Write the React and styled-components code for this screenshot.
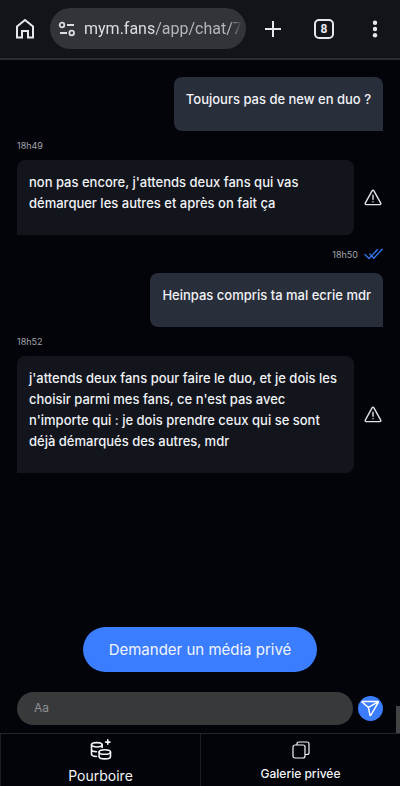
import React from "react";
import styled, { createGlobalStyle } from "styled-components";

const GlobalStyle = createGlobalStyle`
  * {
    box-sizing: border-box;
  }

  body {
    margin: 0;
    background: #020409;
    color: #f1f3f7;
    font-family: Inter, "Liberation Sans", sans-serif;
  }

  button {
    margin: 0;
    padding: 0;
    border: none;
    background: none;
    color: inherit;
    font: inherit;
    cursor: pointer;
  }

  svg {
    display: block;
    flex: none;
  }
`;

const Page = styled.div`
  display: flex;
  flex-direction: column;
  min-height: 100vh;
`;

const BrowserBar = styled.header`
  display: flex;
  align-items: center;
  gap: 12px;
  height: 60px;
  padding: 0 12px 1px;
  background: #131419;
  border-bottom: 2px solid #2b2c30;
`;

const BarButton = styled.button`
  display: flex;
  align-items: center;
  justify-content: center;
  width: 26px;
  height: 40px;
  color: #e6e7ec;
`;

const Address = styled.button`
  display: flex;
  flex: 1;
  align-items: center;
  gap: 8px;
  min-width: 0;
  height: 41px;
  padding: 0 4px 0 8px;
  border-radius: 21px;
  background: #33343a;
  color: #b4b5bb;
  font-family: Roboto, sans-serif;
  font-size: 16px;
`;

const Url = styled.span`
  flex: 1;
  overflow: hidden;
  white-space: nowrap;
  text-align: left;
  mask-image: linear-gradient(to right, #000 92%, transparent);
`;

const Host = styled.span`
  color: #dcdde2;
`;

const BarActions = styled.div`
  display: flex;
  gap: 25px;
  padding-left: 2px;
`;

const Chat = styled.main`
  flex: 1;
  padding: 17px 17px 0;
`;

const Message = styled.div`
  display: flex;
  align-items: center;
  justify-content: ${({ $sent }) => ($sent ? "flex-end" : "space-between")};
`;

const Bubble = styled.p`
  max-width: 337px;
  width: ${({ $sent }) => ($sent ? "auto" : "100%")};
  margin: 0;
  padding: 12px 12px 21px;
  border-radius: ${({ $sent }) => ($sent ? "8px 8px 0 8px" : "8px 8px 8px 0")};
  background: ${({ $sent }) => ($sent ? "#292e3b" : "#12151c")};
  font-size: 13px;
  font-weight: 500;
  line-height: 21px;
`;

const ReportButton = styled.button`
  padding: 1px;
`;

const Time = styled.div`
  display: flex;
  align-items: center;
  justify-content: ${({ $sent }) => ($sent ? "flex-end" : "flex-start")};
  gap: 6px;
  height: ${({ $sent }) => ($sent ? "38px" : "29px")};
  color: #a2a4a9;
  font-size: 9px;
`;

const Composer = styled.form`
  padding: 0 17px 8px;
`;

const RequestButton = styled.button`
  display: block;
  height: 45px;
  margin: 0 auto 20px;
  padding: 0 26px;
  border-radius: 23px;
  background: #3b7dff;
  color: #f1f5ff;
  font-size: 15px;
`;

const InputRow = styled.div`
  display: flex;
  align-items: center;
  gap: 5px;
`;

const TextInput = styled.input`
  flex: 1;
  min-width: 0;
  height: 33px;
  padding: 0 17px 3px;
  border: none;
  border-radius: 17px;
  outline: none;
  background: #38393b;
  color: #f1f3f7;
  font-family: Inter, sans-serif;
  font-size: 12px;

  &::placeholder {
    color: #8f9093;
    opacity: 1;
  }
`;

const SendButton = styled.button`
  display: flex;
  align-items: center;
  justify-content: center;
  width: 25px;
  height: 25px;
  border-radius: 50%;
  background: #3b7dff;
`;

const Footer = styled.nav`
  display: grid;
  grid-template-columns: 1fr 1fr;
  border-top: 1px solid #24262a;
`;

const FooterButton = styled.button`
  display: flex;
  flex-direction: column;
  align-items: center;
  justify-content: flex-end;
  gap: 7px;
  height: 52px;
  padding-bottom: ${({ $bottom }) => $bottom};
  border-left: 1px solid #1d1f23;
  color: #f4f5f7;
  font-size: ${({ $size }) => $size};
  font-weight: ${({ $weight }) => $weight};
  line-height: 16px;
`;

const ScrollThumb = styled.div`
  position: fixed;
  right: 0;
  bottom: 53px;
  width: 4px;
  height: 27px;
  background: #424345;
`;

const HomeIcon = () => (
  <svg width="20" height="22" viewBox="0 0 20 22" fill="none" stroke="currentColor" strokeWidth="2">
    <path d="M2 8.500 10 2l8 6.500V19.500h-5v-6.500H7v6.500H2Z" />
  </svg>
);

const TuneIcon = () => (
  <svg width="18" height="16" viewBox="0 0 18 16" fill="none" stroke="#dcdde2" strokeWidth="1.800">
    <circle cx="4" cy="4" r="2.300" />
    <path d="M9 4h7M2 12h7" />
    <circle cx="13.700" cy="12" r="2.300" />
  </svg>
);

const PlusIcon = () => (
  <svg width="18" height="18" viewBox="0 0 18 18" fill="none" stroke="currentColor" strokeWidth="2">
    <path d="M9 1v16M1 9h16" />
  </svg>
);

const TabCount = styled.span`
  display: flex;
  align-items: center;
  justify-content: center;
  width: 20px;
  height: 20px;
  border: 2px solid currentColor;
  border-radius: 5px;
  font-family: Roboto, sans-serif;
  font-size: 12px;
  font-weight: 700;
  line-height: 12px;
`;

const DotsIcon = () => (
  <svg width="6" height="18" viewBox="0 0 6 18" fill="currentColor">
    <circle cx="3" cy="2.800" r="2.200" />
    <circle cx="3" cy="9" r="2.200" />
    <circle cx="3" cy="15.200" r="2.200" />
  </svg>
);

const WarningIcon = () => (
  <svg
    width="18"
    height="17"
    viewBox="0 0 18 17"
    fill="none"
    stroke="#e3e4e7"
    strokeWidth="1.400"
    strokeLinecap="round"
    strokeLinejoin="round"
  >
    <path d="M8.200 1.700 1.300 14.100Q.800 15.500 2.200 15.600H15.800Q17.200 15.500 16.700 14.100L9.800 1.700Q9 .600 8.200 1.700Z" />
    <path d="M9 6.200v4M9 12.600v.200" />
  </svg>
);

const DoubleCheckIcon = () => (
  <svg
    width="19"
    height="12"
    viewBox="0 0 19 12"
    fill="none"
    stroke="#3577ee"
    strokeWidth="1.300"
    strokeLinecap="round"
    strokeLinejoin="round"
  >
    <path d="m1 6.500 4 4 8.500-9M5.800 6l4 4.200L18.200 1.200" />
  </svg>
);

const SendIcon = () => (
  <svg
    width="19"
    height="17"
    viewBox="0 0 19 17"
    fill="none"
    stroke="#fff"
    strokeWidth="1.400"
    strokeLinecap="round"
    strokeLinejoin="round"
  >
    <path d="M1.500 1.500h15.300q.900.100.500.900L9.900 15.200q-.600.800-1-.200L7.400 7.400 1.200 2.300q-.400-.600.300-.800ZM7.400 7.400l9.800-5.600" />
  </svg>
);

const CoinsIcon = () => (
  <svg width="22" height="22" viewBox="0 0 22 22" fill="none" stroke="currentColor" strokeWidth="1.600" strokeLinecap="round">
    <ellipse cx="6.800" cy="5.800" rx="5.300" ry="2.200" />
    <path d="M1.500 5.800v9.500c0 1.200 2 2 5 2.200M12.100 5.800v2.600M1.500 10.500c0 1.200 2 2.200 5 2.200" />
    <ellipse cx="14.800" cy="13" rx="5.700" ry="2.300" />
    <path d="M9.100 13v4.500c0 1.300 2.500 2.400 5.700 2.400s5.700-1.100 5.700-2.400V13" />
    <path d="M17.800.900v4.400M15.600 3.100H20" />
  </svg>
);

const GalleryIcon = () => (
  <svg width="18" height="18" viewBox="0 0 18 18" fill="none" stroke="currentColor" strokeWidth="1.200" strokeLinejoin="round">
    <rect x="1" y="4" width="12" height="13" rx="2" />
    <path d="M5 4V3q0-2 2-2h8q2 0 2 2v8.500q0 2-2 2h-2" />
  </svg>
);

const messages = [
  { sent: true, text: "Toujours pas de new en duo ?" },
  {
    time: "18h49",
    text: "non pas encore, j'attends deux fans qui vas démarquer les autres et après on fait ça",
  },
  { sent: true, time: "18h50", text: "Heinpas compris ta mal ecrie mdr" },
  {
    time: "18h52",
    text: "j'attends deux fans pour faire le duo, et je dois les choisir parmi mes fans, ce n'est pas avec n'importe qui : je dois prendre ceux qui se sont déjà démarqués des autres, mdr",
  },
];

const App = () => (
  <Page>
    <GlobalStyle />
    <BrowserBar>
      <BarButton aria-label="Accueil">
        <HomeIcon />
      </BarButton>
      <Address>
        <TuneIcon />
        <Url>
          <Host>mym.fans</Host>/app/chat/7
        </Url>
      </Address>
      <BarActions>
        <BarButton aria-label="Nouvel onglet">
          <PlusIcon />
        </BarButton>
        <BarButton aria-label="Onglets">
          <TabCount>8</TabCount>
        </BarButton>
        <BarButton aria-label="Menu">
          <DotsIcon />
        </BarButton>
      </BarActions>
    </BrowserBar>

    <Chat>
      {messages.map(({ sent, time, text }) => (
        <React.Fragment key={text}>
          {time && (
            <Time $sent={sent}>
              {time}
              {sent && <DoubleCheckIcon />}
            </Time>
          )}
          <Message $sent={sent}>
            <Bubble $sent={sent}>{text}</Bubble>
            {!sent && (
              <ReportButton aria-label="Signaler">
                <WarningIcon />
              </ReportButton>
            )}
          </Message>
        </React.Fragment>
      ))}
    </Chat>

    <Composer onSubmit={(e) => e.preventDefault()}>
      <RequestButton type="button">Demander un média privé</RequestButton>
      <InputRow>
        <TextInput type="text" placeholder="Aa" aria-label="Message" />
        <SendButton type="submit" aria-label="Envoyer">
          <SendIcon />
        </SendButton>
      </InputRow>
    </Composer>

    <Footer>
      <FooterButton $size="14px" $weight={400} $bottom="2px">
        <CoinsIcon />
        Pourboire
      </FooterButton>
      <FooterButton $size="12px" $weight={500} $bottom="4px">
        <GalleryIcon />
        Galerie privée
      </FooterButton>
    </Footer>
    <ScrollThumb />
  </Page>
);

export default App;
